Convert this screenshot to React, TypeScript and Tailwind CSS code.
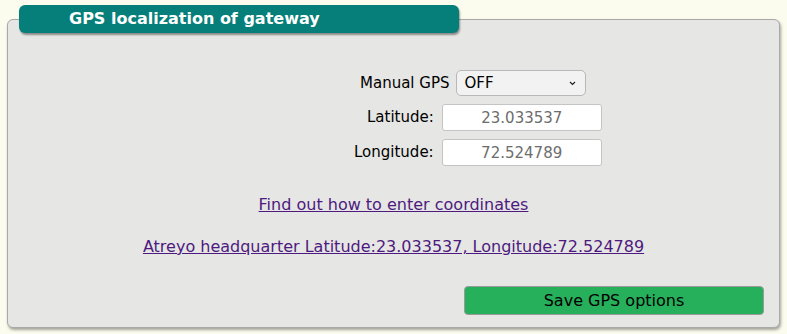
import React from 'react';

export default function App() {
  const font = { fontFamily: '"DejaVu Sans", Verdana, sans-serif' };
  return (
    <div className="w-[787px] h-[334px] bg-[#fbfbee] relative overflow-hidden" style={font}>
      <div className="pt-[19px] pl-[7px]">
        <div className="w-[773px] h-[309px] bg-[#e6e6e4] border border-[#a9a9a9] rounded-[6px] shadow-[1px_2px_3px_rgba(0,0,0,0.35)] flex flex-col">
          {/* form rows */}
          <div className="mt-[50px] flex flex-col gap-[8px] text-[15px] text-black">
            <div className="flex items-center ml-[352px] gap-[7px]">
              <span>Manual GPS</span>
              <div className="relative">
                <select className="appearance-none w-[130px] h-[26px] bg-[#f2f2f2] border border-[#b8b8b8] rounded-[5px] pl-[7px] text-[15px] text-black" style={font} defaultValue="OFF">
                  <option>OFF</option>
                  <option>ON</option>
                </select>
                <svg className="absolute right-[10px] top-[11px] pointer-events-none" width="7" height="5" viewBox="0 0 7 5">
                  <path d="M1 1l2.5 2.5L6 1" fill="none" stroke="#222" strokeWidth="1.2" />
                </svg>
              </div>
            </div>
            <div className="flex items-center ml-[359px] gap-[8px]">
              <span>Latitude:</span>
              <input className="w-[160px] h-[27px] bg-white border border-[#c4c4c4] rounded-[3px] text-center text-[15px] text-[#6d6d6d]" style={font} defaultValue="23.033537" />
            </div>
            <div className="flex items-center ml-[346px] gap-[8px]">
              <span>Longitude:</span>
              <input className="w-[160px] h-[27px] bg-white border border-[#c4c4c4] rounded-[3px] text-center text-[15px] text-[#6d6d6d]" style={font} defaultValue="72.524789" />
            </div>
          </div>
          {/* links */}
          <div className="mt-[27px] flex flex-col items-center gap-[18px] text-[16px] text-[#4d1a7f]">
            <a href="#" className="underline">Find out how to enter coordinates</a>
            <a href="#" className="underline">Atreyo headquarter Latitude:23.033537, Longitude:72.524789</a>
          </div>
          {/* button */}
          <div className="mt-auto mb-[12px] flex justify-end pr-[15px]">
            <button className="w-[300px] h-[29px] bg-[#27b05b] border border-[#9a9a9a] rounded-[4px] text-[16px] text-black" style={font}>
              Save GPS options
            </button>
          </div>
        </div>
      </div>
      {/* title tab */}
      <div className="absolute left-[19px] top-[5px] w-[440px] h-[28px] bg-[#067f7a] rounded-[6px] shadow-[1px_2px_2px_rgba(0,0,0,0.4)] flex items-center pl-[50px]">
        <span className="text-white font-bold text-[16px]">GPS localization of gateway</span>
      </div>
    </div>
  );
}
